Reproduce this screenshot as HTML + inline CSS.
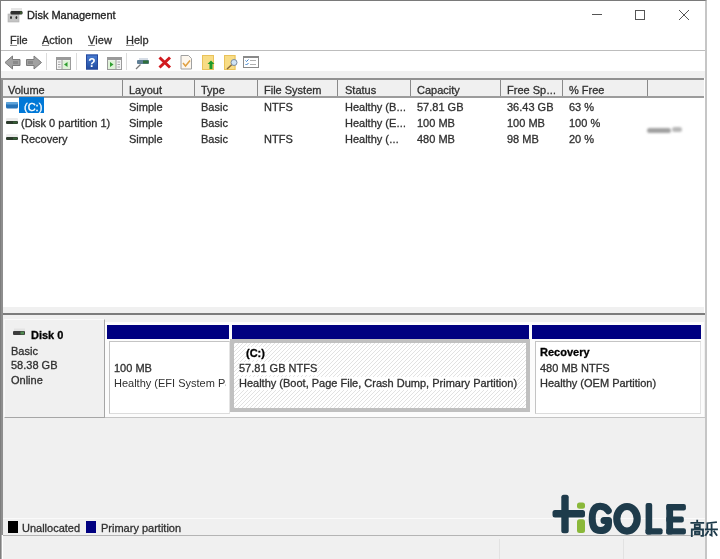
<!DOCTYPE html>
<html><head><meta charset="utf-8">
<style>
*{margin:0;padding:0;box-sizing:border-box}
html,body{width:720px;height:559px;overflow:hidden;background:#fff}
body{position:relative;font-family:"Liberation Sans",sans-serif;font-size:11px;color:#303030}
.a{position:absolute;white-space:nowrap}
.t{position:absolute;white-space:nowrap;line-height:13px;height:13px;-webkit-text-stroke:0.3px currentColor}
u{text-decoration:none;border-bottom:1px solid #8a8a8a;display:inline-block;line-height:10px}
#w{position:absolute;left:0;top:0;width:720px;height:559px;filter:blur(0.35px)}
</style></head><body><div id="w">
<!-- window frame -->
<div class="a" style="left:0;top:0;width:707px;height:559px;background:#fff;border-top:1px solid #7a7a7a;border-left:1px solid #7e7e7e;border-right:2px solid #c6c6c6"></div>

<!-- title icon -->
<svg class="a" style="left:0;top:0" width="30" height="30" viewBox="0 0 30 30">
<rect x="11" y="8" width="11" height="3" fill="#e6e6e6"/>
<rect x="8" y="14" width="11" height="8" fill="#c4c4c4"/>
<rect x="8" y="14" width="11" height="8" fill="none" stroke="#b0b0b0" stroke-width="0.6"/>
<rect x="10.5" y="11" width="12" height="3.4" rx="1.2" fill="#2e2e2e"/>
<rect x="20" y="11.5" width="2" height="2.4" fill="#3c5a30"/>
<ellipse cx="11" cy="17.6" rx="0.9" ry="1.5" fill="#2a2a2a"/>
<ellipse cx="16.4" cy="17.6" rx="0.9" ry="1.5" fill="#2a2a2a"/>
</svg>
<div class="t" style="left:27px;top:9px;font-size:11px;color:#222">Disk Management</div>

<!-- window controls -->
<div class="a" style="left:592px;top:14px;width:10px;height:1px;background:#555"></div>
<div class="a" style="left:635px;top:10px;width:10px;height:10px;border:1px solid #555"></div>
<svg class="a" style="left:678px;top:9px" width="12" height="12" viewBox="0 0 12 12"><path d="M1 1L11 11M11 1L1 11" stroke="#555" stroke-width="1"/></svg>

<!-- menu -->
<div class="t" style="left:10px;top:34px"><u>F</u>ile</div>
<div class="t" style="left:42px;top:34px"><u>A</u>ction</div>
<div class="t" style="left:88px;top:34px"><u>V</u>iew</div>
<div class="t" style="left:126px;top:34px"><u>H</u>elp</div>
<div class="a" style="left:1px;top:50px;width:704px;height:1px;background:#bdbdbd"></div>

<!-- toolbar band -->
<div class="a" style="left:1px;top:71px;width:704px;height:7px;background:#f1f1f1"></div>
<!-- separators -->
<div class="a" style="left:46px;top:53px;width:1px;height:17px;background:#dcdcdc"></div>
<div class="a" style="left:76px;top:53px;width:1px;height:17px;background:#dcdcdc"></div>
<div class="a" style="left:126px;top:53px;width:1px;height:17px;background:#dcdcdc"></div>


<!-- toolbar icons -->
<svg class="a" style="left:0;top:50px" width="270" height="24" viewBox="0 50 270 24">
<!-- back -->
<path d="M5 62.5 L12.5 56 L12.5 59.5 L20 59.5 L20 65.5 L12.5 65.5 L12.5 69 Z" fill="#a2a2a2" stroke="#7c7c7c" stroke-width="1"/>
<rect x="13" y="61" width="5" height="3" fill="#8a8a8a"/>
<!-- forward -->
<path d="M41.5 62.5 L34 56 L34 59.5 L26.5 59.5 L26.5 65.5 L34 65.5 L34 69 Z" fill="#a2a2a2" stroke="#7c7c7c" stroke-width="1"/>
<rect x="28" y="61" width="5" height="3" fill="#8a8a8a"/>
<!-- show/hide tree -->
<rect x="56.5" y="57.5" width="14" height="12" fill="#f4f4f4" stroke="#9a9a9a"/>
<rect x="56.5" y="57.5" width="14" height="2.5" fill="#9a9a9a"/>
<rect x="62" y="60.5" width="8" height="8.5" fill="#dff2d8"/>
<line x1="62" y1="60" x2="62" y2="69" stroke="#9a9a9a"/>
<path d="M58 62h2.5M58 64.5h2.5M58 67h2.5" stroke="#a8a8a8" stroke-width="1"/>
<path d="M64 64.5 L67.5 62 L67.5 67 Z" fill="#2f9e2f"/>
<!-- help -->
<defs><linearGradient id="hg" x1="0" y1="0" x2="0" y2="1"><stop offset="0" stop-color="#4a7fd6"/><stop offset="1" stop-color="#1f4a9e"/></linearGradient></defs><rect x="86" y="54.5" width="12" height="15" fill="url(#hg)"/>
<rect x="86.5" y="55" width="11" height="14" fill="none" stroke="#26489a" stroke-width="1"/>
<text x="92" y="66.5" font-family="Liberation Sans" font-weight="bold" font-size="12" fill="#fff" text-anchor="middle">?</text>
<!-- show/hide action pane -->
<rect x="107.5" y="57.5" width="14" height="12" fill="#f4f4f4" stroke="#9a9a9a"/>
<rect x="107.5" y="57.5" width="14" height="2.5" fill="#9a9a9a"/>
<rect x="108" y="60.5" width="8" height="8.5" fill="#dff2d8"/>
<line x1="116" y1="60" x2="116" y2="69" stroke="#9a9a9a"/>
<path d="M117.5 62h2.5M117.5 64.5h2.5M117.5 67h2.5" stroke="#a8a8a8" stroke-width="1"/>
<path d="M113.5 64.5 L110 62 L110 67 Z" fill="#2f9e2f"/>
<!-- connect -->
<rect x="139" y="58" width="9" height="2" fill="#d6dde6"/>
<rect x="137" y="60" width="12" height="4" rx="1" fill="#5f7f96"/>
<rect x="143" y="60.5" width="5.5" height="3" fill="#2f6f3a"/>
<line x1="136" y1="69" x2="140.5" y2="64.5" stroke="#7a7a7a" stroke-width="1.2"/>
<!-- delete X -->
<path d="M159.5 57.5 L170 67.5 M170 57.5 L159.5 67.5" stroke="#d11a1f" stroke-width="3"/>
<!-- properties doc -->
<path d="M181 55.5 H188.5 L191.5 58.5 V69 H181 Z" fill="#fdf7ee" stroke="#a0a0a0" stroke-width="1"/>
<path d="M183 63 L185.5 66 L190 60.5" fill="none" stroke="#e0a040" stroke-width="1.5"/>
<!-- folder up -->
<rect x="202" y="55" width="12" height="15" fill="#f8dc85"/>
<rect x="202.5" y="55.5" width="11" height="14" fill="none" stroke="#e9c25a" stroke-width="1"/>
<path d="M211 60.5 L214.5 64 L212.5 64 L212.5 69 L209.5 69 L209.5 64 L207.5 64 Z" fill="#1f9a2a"/>
<!-- folder search -->
<rect x="224" y="55" width="11.5" height="15" fill="#f8dc85"/>
<rect x="224.5" y="55.5" width="10.5" height="14" fill="none" stroke="#e9c25a" stroke-width="1"/>
<line x1="227" y1="69" x2="232" y2="64.5" stroke="#8a6a3a" stroke-width="1.5"/>
<circle cx="234" cy="62.5" r="3" fill="#cfe3f5" stroke="#7a8ca0" stroke-width="1"/>
<!-- settings -->
<rect x="243.5" y="56.5" width="15" height="11" fill="#fff" stroke="#8a8a8a" stroke-width="1"/>
<rect x="243.5" y="56.5" width="15" height="1.5" fill="#8a8a8a"/>
<path d="M245.5 60.5 L246.5 61.5 L248.5 59.5 M245.5 64 L246.5 65 L248.5 63" fill="none" stroke="#3a7fc8" stroke-width="1"/>
<path d="M250 60.5h6M250 64.5h6" stroke="#b0b0b0" stroke-width="1"/>
</svg>

<!-- list -->
<div class="a" style="left:1px;top:78px;width:703px;height:235px;background:#fff;border-top:2px solid #929292"></div>
<div class="a" style="left:3px;top:80px;width:701px;height:18px;background:#f0f0f0;border-bottom:2px solid #9c9c9c"></div>

<!-- header -->
<div class="a" style="left:122px;top:80px;width:1px;height:16px;background:#8a8a8a"></div>
<div class="a" style="left:194px;top:80px;width:1px;height:16px;background:#8a8a8a"></div>
<div class="a" style="left:257px;top:80px;width:1px;height:16px;background:#8a8a8a"></div>
<div class="a" style="left:337px;top:80px;width:1px;height:16px;background:#8a8a8a"></div>
<div class="a" style="left:410px;top:80px;width:1px;height:16px;background:#8a8a8a"></div>
<div class="a" style="left:500px;top:80px;width:1px;height:16px;background:#8a8a8a"></div>
<div class="a" style="left:562px;top:80px;width:1px;height:16px;background:#8a8a8a"></div>
<div class="a" style="left:647px;top:80px;width:1px;height:16px;background:#8a8a8a"></div>
<div class="t" style="left:8px;top:84px">Volume</div>
<div class="t" style="left:129px;top:84px">Layout</div>
<div class="t" style="left:201px;top:84px">Type</div>
<div class="t" style="left:264px;top:84px">File System</div>
<div class="t" style="left:345px;top:84px">Status</div>
<div class="t" style="left:417px;top:84px">Capacity</div>
<div class="t" style="left:507px;top:84px">Free Sp<span style="letter-spacing:-1px;font-size:10px">…</span></div>
<div class="t" style="left:569px;top:84px">% Free</div>
<!-- rows -->
<div class="a" style="left:19px;top:97px;width:25px;height:16px;background:#0078d7"></div>
<div class="t" style="left:24px;top:101px;color:#fff">(C:)</div>
<div class="t" style="left:129px;top:101px">Simple</div>
<div class="t" style="left:201px;top:101px">Basic</div>
<div class="t" style="left:264px;top:101px">NTFS</div>
<div class="t" style="left:345px;top:101px">Healthy (B<span style="letter-spacing:-1px;font-size:10px">…</span></div>
<div class="t" style="left:417px;top:101px">57.81 GB</div>
<div class="t" style="left:507px;top:101px">36.43 GB</div>
<div class="t" style="left:569px;top:101px">63 %</div>
<div class="t" style="left:21px;top:117px">(Disk 0 partition 1)</div>
<div class="t" style="left:129px;top:117px">Simple</div>
<div class="t" style="left:201px;top:117px">Basic</div>
<div class="t" style="left:345px;top:117px">Healthy (E<span style="letter-spacing:-1px;font-size:10px">…</span></div>
<div class="t" style="left:417px;top:117px">100 MB</div>
<div class="t" style="left:507px;top:117px">100 MB</div>
<div class="t" style="left:569px;top:117px">100 %</div>
<div class="t" style="left:21px;top:133px">Recovery</div>
<div class="t" style="left:129px;top:133px">Simple</div>
<div class="t" style="left:201px;top:133px">Basic</div>
<div class="t" style="left:264px;top:133px">NTFS</div>
<div class="t" style="left:345px;top:133px">Healthy (<span style="letter-spacing:-1px;font-size:10px">…</span></div>
<div class="t" style="left:417px;top:133px">480 MB</div>
<div class="t" style="left:507px;top:133px">98 MB</div>
<div class="t" style="left:569px;top:133px">20 %</div>

<!-- row icons -->
<svg class="a" style="left:0;top:96px" width="20" height="50" viewBox="0 96 20 50">
<rect x="6" y="102" width="12" height="6.5" rx="1.5" fill="#2673b8"/>
<rect x="6" y="102" width="12" height="2.5" rx="1.2" fill="#5ea4da"/>
<rect x="6" y="118" width="12" height="3.5" rx="1" fill="#ebebeb"/>
<rect x="6" y="121" width="12" height="3" rx="1" fill="#2c3b2c"/>
<rect x="13" y="121.5" width="4" height="2" fill="#365f36"/>
<rect x="6" y="134" width="12" height="3.5" rx="1" fill="#ebebeb"/>
<rect x="6" y="137" width="12" height="3" rx="1" fill="#2c3b2c"/>
<rect x="13" y="137.5" width="4" height="2" fill="#365f36"/>
</svg>

<!-- disk pane -->
<div class="a" style="left:3px;top:307px;width:701px;height:6px;background:#f0f0f0"></div>
<div class="a" style="left:3px;top:313px;width:702px;height:2px;background:#7c7c7c"></div>
<div class="a" style="left:3px;top:315px;width:702px;height:244px;background:#f0f0f0"></div>


<!-- disk label box -->
<div class="a" style="left:4px;top:319px;width:101px;height:99px;background:#f0f0f0;border-top:1px solid #fafafa;border-left:1px solid #fafafa;border-right:1px solid #a6a6a6;border-bottom:1px solid #a6a6a6"></div>
<svg class="a" style="left:13px;top:328px" width="13" height="8" viewBox="0 0 13 8">
<rect x="1" y="0.5" width="11" height="2.5" fill="#e4e4e4"/>
<rect x="0" y="3" width="12" height="4" rx="1" fill="#3c3c3c"/>
<rect x="7.5" y="3.6" width="3.5" height="2.8" fill="#4f8a4f"/>
</svg>
<div class="t" style="left:31px;top:329px;font-weight:bold;color:#000">Disk 0</div>
<div class="t" style="left:11px;top:345px">Basic</div>
<div class="t" style="left:11px;top:359px">58.38 GB</div>
<div class="t" style="left:11px;top:374px">Online</div>

<!-- partitions frame -->
<div class="a" style="left:105px;top:322px;width:599px;height:95px;background:#fcfcfc"></div>
<div class="a" style="left:105px;top:417px;width:600px;height:1px;background:#c4c4c4"></div>
<!-- EFI -->
<div class="a" style="left:107px;top:325px;width:122px;height:14px;background:#000080"></div>
<div class="a" style="left:109px;top:341px;width:121px;height:73px;background:#fff;border:1px solid #c4c4c4;border-right-color:#e4e4e4;border-bottom-color:#dcdcdc"></div>
<div class="t" style="left:114px;top:362px">100 MB</div>
<div class="a" style="left:114px;top:377px;width:112px;height:13px;overflow:hidden;white-space:nowrap;line-height:13px">Healthy (EFI System Partition)</div>
<!-- C: -->
<div class="a" style="left:232px;top:325px;width:297px;height:14px;background:#000080"></div>
<svg class="a" style="left:230px;top:339px" width="300" height="73">
<rect x="0" y="0" width="300" height="73" fill="#fff"/>
<path d="M-80 73 L-7 0 M-76 73 L-3 0 M-72 73 L1 0 M-68 73 L5 0 M-64 73 L9 0 M-60 73 L13 0 M-56 73 L17 0 M-52 73 L21 0 M-48 73 L25 0 M-44 73 L29 0 M-40 73 L33 0 M-36 73 L37 0 M-32 73 L41 0 M-28 73 L45 0 M-24 73 L49 0 M-20 73 L53 0 M-16 73 L57 0 M-12 73 L61 0 M-8 73 L65 0 M-4 73 L69 0 M0 73 L73 0 M4 73 L77 0 M8 73 L81 0 M12 73 L85 0 M16 73 L89 0 M20 73 L93 0 M24 73 L97 0 M28 73 L101 0 M32 73 L105 0 M36 73 L109 0 M40 73 L113 0 M44 73 L117 0 M48 73 L121 0 M52 73 L125 0 M56 73 L129 0 M60 73 L133 0 M64 73 L137 0 M68 73 L141 0 M72 73 L145 0 M76 73 L149 0 M80 73 L153 0 M84 73 L157 0 M88 73 L161 0 M92 73 L165 0 M96 73 L169 0 M100 73 L173 0 M104 73 L177 0 M108 73 L181 0 M112 73 L185 0 M116 73 L189 0 M120 73 L193 0 M124 73 L197 0 M128 73 L201 0 M132 73 L205 0 M136 73 L209 0 M140 73 L213 0 M144 73 L217 0 M148 73 L221 0 M152 73 L225 0 M156 73 L229 0 M160 73 L233 0 M164 73 L237 0 M168 73 L241 0 M172 73 L245 0 M176 73 L249 0 M180 73 L253 0 M184 73 L257 0 M188 73 L261 0 M192 73 L265 0 M196 73 L269 0 M200 73 L273 0 M204 73 L277 0 M208 73 L281 0 M212 73 L285 0 M216 73 L289 0 M220 73 L293 0 M224 73 L297 0 M228 73 L301 0 M232 73 L305 0 M236 73 L309 0 M240 73 L313 0 M244 73 L317 0 M248 73 L321 0 M252 73 L325 0 M256 73 L329 0 M260 73 L333 0 M264 73 L337 0 M268 73 L341 0 M272 73 L345 0 M276 73 L349 0 M280 73 L353 0 M284 73 L357 0 M288 73 L361 0 M292 73 L365 0 M296 73 L369 0 M300 73 L373 0 M304 73 L377 0 M308 73 L381 0 M312 73 L385 0 M316 73 L389 0 M320 73 L393 0 M324 73 L397 0 M328 73 L401 0 M332 73 L405 0 M336 73 L409 0 M340 73 L413 0 M344 73 L417 0 M348 73 L421 0 M352 73 L425 0 M356 73 L429 0 M360 73 L433 0 M364 73 L437 0 M368 73 L441 0 M372 73 L445 0 M376 73 L449 0 M380 73 L453 0 M384 73 L457 0 M388 73 L461 0 M392 73 L465 0 M396 73 L469 0" stroke="#e2e2e2" stroke-width="1"/>
<rect x="2" y="2" width="296" height="69" fill="none" stroke="#c0c0c0" stroke-width="4"/>
</svg>
<div class="t" style="left:246px;top:347px;font-weight:bold;color:#000;background:#fff">(C:)</div>
<div class="t" style="left:239px;top:362px;background:#fff">57.81 GB NTFS</div>
<div class="t" style="left:239px;top:377px;background:#fff">Healthy (Boot, Page File, Crash Dump, Primary Partition)</div>
<!-- Recovery -->
<div class="a" style="left:532px;top:325px;width:169px;height:14px;background:#000080"></div>
<div class="a" style="left:535px;top:341px;width:166px;height:73px;background:#fff;border:1px solid #c4c4c4;border-right-color:#e4e4e4;border-bottom-color:#dcdcdc"></div>
<div class="t" style="left:540px;top:346px;font-weight:bold;color:#000">Recovery</div>
<div class="t" style="left:540px;top:362px">480 MB NTFS</div>
<div class="t" style="left:540px;top:377px">Healthy (OEM Partition)</div>

<!-- legend -->
<div class="a" style="left:1px;top:80px;width:2px;height:455px;background:#8e8e8e"></div>
<div class="a" style="left:1px;top:535px;width:1px;height:24px;background:#b0b0b0"></div>
<div class="a" style="left:3px;top:518px;width:702px;height:1px;background:#fafafa"></div>
<div class="a" style="left:499px;top:539px;width:1px;height:20px;background:#e2e2e2"></div>
<div class="a" style="left:623px;top:539px;width:1px;height:20px;background:#e2e2e2"></div>

<div class="a" style="left:3px;top:535px;width:702px;height:1px;background:#b4b4b4"></div>
<div class="a" style="left:8px;top:521px;width:10px;height:12px;background:#000"></div>
<div class="t" style="left:22px;top:522px">Unallocated</div>
<div class="a" style="left:86px;top:521px;width:10px;height:12px;background:#000080"></div>
<div class="t" style="left:101px;top:522px">Primary partition</div>


<!-- watermark smudge -->
<div class="a" style="left:647px;top:128px;width:24px;height:5px;border-radius:3px;background:#8a8a8a;filter:blur(1.3px);opacity:.8"></div>
<div class="a" style="left:672px;top:127px;width:10px;height:5px;border-radius:3px;background:#9a9a9a;filter:blur(1.3px);opacity:.7"></div>

<!-- logo -->
<svg class="a" style="left:540px;top:488px" width="180" height="71" viewBox="540 488 180 71">
<g fill="#1e3b4b">
<rect x="561.3" y="494.8" width="7.4" height="38.4" rx="2.5"/>
<rect x="552.5" y="509.9" width="32.5" height="7.5" rx="2.5"/>
</g>
<g stroke="#1e3b4b" stroke-linecap="round" stroke-linejoin="round" fill="none">
<path d="M608.3 510.8 C606.5 507.8 603.5 506.3 600.2 506.3 C594.2 506.3 592.2 511 592.2 518.5 C592.2 526.5 594.7 530.6 600.2 530.6 C605.7 530.6 608.5 528 608.5 523 V520.6 H604" stroke-width="7"/>
<ellipse cx="627" cy="518.8" rx="10.2" ry="12.3" stroke-width="7.2"/>
</g>
<g fill="#1e3b4b">
<rect x="645.6" y="502.9" width="6.6" height="31.7" rx="2"/>
<rect x="645.6" y="528.2" width="17" height="6.4" rx="2"/>
<rect x="666.3" y="504" width="6.8" height="30.6" rx="2"/>
<rect x="666.3" y="504" width="19.6" height="6.4" rx="2"/>
<rect x="666.3" y="516.5" width="17.5" height="6" rx="2"/>
<rect x="666.3" y="528.2" width="19.6" height="6.4" rx="2"/>
</g>
<g fill="#8ab83a">
<rect x="577" y="502.4" width="8" height="6.3" rx="2.5"/>
<rect x="577" y="519.3" width="8" height="13.8" rx="2.5"/>
</g>
<!-- 高乐 -->
<g stroke="#1e3b4b" stroke-width="1.8" fill="none" stroke-linecap="square">
<path d="M697.2 520.6 V522 M691.3 522.8 H703.3 M694.8 524.8 H699.8 V527.6 H694.8 Z M691.8 536 V529.5 H703 V535.8 H701.5 M695 531.8 H699.5 V534.2 H695 Z"/>
<path d="M716 522.2 L707.3 523.2 V529.2 M705.8 529.4 H717 M711.6 523.8 V535.5 L710.2 534.8 M708 531.5 L705.8 535 M714.2 531.5 L716.6 535"/>
</g>
</svg>

</div></body></html>
